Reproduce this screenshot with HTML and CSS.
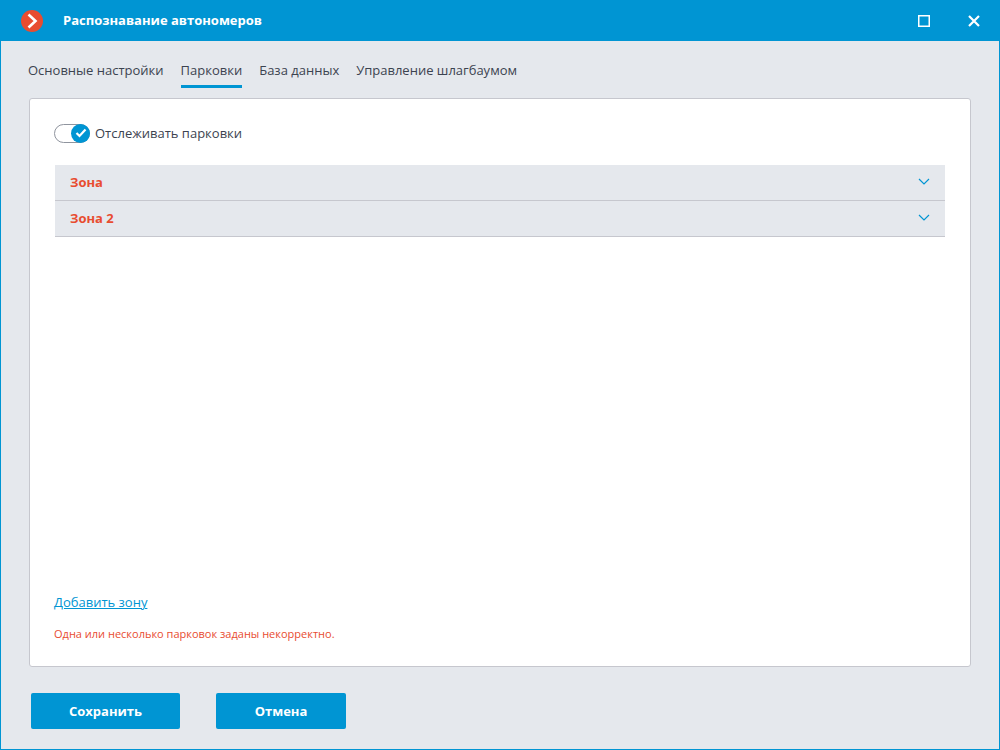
FILE: index.html
```html
<!DOCTYPE html>
<html lang="ru">
<head>
<meta charset="utf-8">
<title>Распознавание автономеров</title>
<link rel="stylesheet" href="styles.css">
</head>
<body>
<div class="window">
  <header class="titlebar">
    <svg class="logo" width="22" height="22" viewBox="0 0 22 22" aria-hidden="true">
      <circle cx="11" cy="11" r="11" fill="#e84c30"/>
      <path d="M7.500 4.500l7 6.500-7 6.500" fill="none" stroke="#fff" stroke-width="2.600"/>
    </svg>
    <h1 class="title">Распознавание автономеров</h1>
    <button class="window-button" type="button" aria-label="Развернуть">
      <svg width="12" height="12" viewBox="0 0 12 12"><rect x=".75" y=".75" width="10.500" height="10.500" fill="none" stroke="#fff" stroke-width="1.500"/></svg>
    </button>
    <button class="window-button" type="button" aria-label="Закрыть">
      <svg width="12" height="12" viewBox="0 0 12 12"><path d="M1 1l10 10M11 1L1 11" stroke="#fff" stroke-width="2.200"/></svg>
    </button>
  </header>
  <nav class="tabs">
    <a class="tab" href="#main">Основные настройки</a>
    <a class="tab tab-active" href="#parking" aria-current="page">Парковки</a>
    <a class="tab" href="#database">База данных</a>
    <a class="tab" href="#barrier">Управление шлагбаумом</a>
  </nav>
  <main class="panel">
    <label class="switch">
      <input class="switch-input" type="checkbox" checked>
      <span class="switch-track"><span class="switch-knob">
        <svg width="12" height="10" viewBox="0 0 12 10"><path d="M1.500 5l3 3 6-6.500" fill="none" stroke="#fff" stroke-width="2.200"/></svg>
      </span></span>
      Отслеживать парковки
    </label>
    <div class="zones">
      <button class="zone" type="button" aria-expanded="false">Зона
        <svg width="12" height="8" viewBox="0 0 12 8"><path d="M1 1l5 5 5-5" fill="none" stroke="#0095d3" stroke-width="1.200"/></svg>
      </button>
      <button class="zone" type="button" aria-expanded="false">Зона 2
        <svg width="12" height="8" viewBox="0 0 12 8"><path d="M1 1l5 5 5-5" fill="none" stroke="#0095d3" stroke-width="1.200"/></svg>
      </button>
    </div>
    <a class="add-link" href="#add">Добавить зону</a>
    <p class="error">Одна или несколько парковок заданы некорректно.</p>
  </main>
  <footer class="actions">
    <button class="button button-save" type="button">Сохранить</button>
    <button class="button button-cancel" type="button">Отмена</button>
  </footer>
</div>
</body>
</html>
```
FILE: styles.css
```css
* { box-sizing: border-box; }
body {
  margin: 0;
  font-family: "Open Sans", "Noto Sans", sans-serif;
  font-size: 13px;
  line-height: 20px;
  color: #3c4350;
}
button { font: inherit; border: 0; cursor: pointer; }
svg { display: block; flex: none; }
.window {
  display: flex;
  flex-direction: column;
  min-height: 100vh;
  background: #e5e8ed;
  border: 1px solid #0095d3;
  border-top: 0;
}
.titlebar {
  display: flex;
  align-items: center;
  height: 41px;
  padding: 0 13px 0 20px;
  background: #0095d3;
}
.title {
  flex: 1;
  margin: 0 0 0 20px;
  padding-bottom: 2px;
  font-size: 13px;
  font-weight: 700;
  color: #fff;
}
.window-button {
  display: flex;
  align-items: center;
  justify-content: center;
  width: 24px;
  height: 24px;
  padding: 0;
  background: none;
}
.window-button + .window-button { margin-left: 26px; }
.tabs {
  display: flex;
  gap: 17px;
  padding: 19px 27px 0;
}
.tab {
  height: 28px;
  color: inherit;
  text-decoration: none;
}
.tab-active { border-bottom: 3px solid #0095d3; }
.panel {
  flex: 1;
  display: flex;
  flex-direction: column;
  align-items: flex-start;
  margin: 10px 28px 0;
  padding: 24px 24px 22px;
  background: #fff;
  border: 1px solid #c6c7ce;
  border-radius: 3px;
}
.switch {
  display: flex;
  align-items: center;
  gap: 5px;
  position: relative;
}
.switch-input {
  position: absolute;
  opacity: 0;
  margin: 0;
}
.switch-track {
  display: flex;
  width: 36px;
  height: 19px;
  border: 1px solid #8f949e;
  border-radius: 10px;
}
.switch-knob {
  display: flex;
  align-items: center;
  justify-content: center;
  width: 19px;
  height: 19px;
  margin: -1px;
  border-radius: 50%;
  background: #8f949e;
}
.switch-input:checked + .switch-track .switch-knob {
  margin-left: auto;
  background: #0095d3;
}
.zones {
  align-self: stretch;
  flex: 1;
  padding: 22px 1px 0;
}
.zone {
  display: flex;
  align-items: center;
  justify-content: space-between;
  width: 100%;
  height: 36px;
  padding: 0 15px 2px;
  background: #e5e8ed;
  border-bottom: 1px solid #c6c7ce;
  font-weight: 700;
  color: #e84c30;
}
.add-link { color: #0095d3; }
.error {
  margin: 12px 0 0;
  font-size: 11px;
  color: #e84c30;
}
.actions {
  display: flex;
  gap: 36px;
  padding: 26px 30px 20px;
}
.button {
  height: 36px;
  background: #0095d3;
  border-radius: 2px;
  color: #fff;
  font-weight: 700;
}
.button-save { width: 149px; }
.button-cancel { width: 130px; }
```
